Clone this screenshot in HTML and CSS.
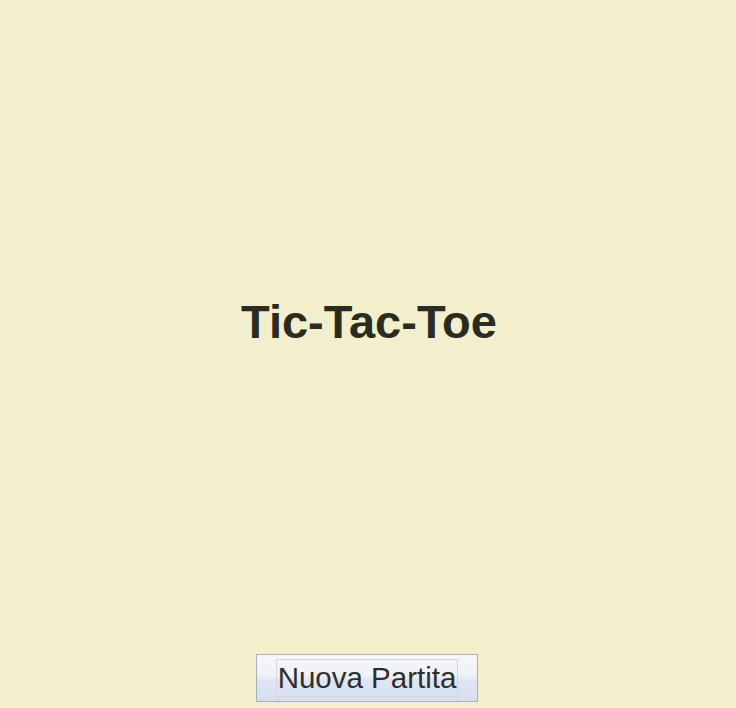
FILE: index.html
```html
<!DOCTYPE html>
<html lang="it">
<head>
<meta charset="utf-8">
<title>Tic-Tac-Toe</title>
<link rel="stylesheet" href="styles.css">
</head>
<body>
<main class="page">
  <h1 class="title">Tic-Tac-Toe</h1>
  <button class="new-game" type="button"><span class="focus">Nuova Partita</span></button>
</main>
</body>
</html>
```
FILE: styles.css
```css
html, body {
  margin: 0;
  padding: 0;
  background: #f2f0cc;
}
body {
  width: 736px;
  height: 708px;
  overflow: hidden;
  font-family: "Liberation Sans", Arial, sans-serif;
}
.page {
  display: flex;
  flex-direction: column;
  align-items: center;
  padding-left: 2px;
}
.title {
  margin: 295px 0 0 0;
  font-size: 47px;
  line-height: 54px;
  font-weight: bold;
  color: #2b2b22;
}
.new-game {
  margin-top: 305px;
  margin-left: -4px;
  width: 222px;
  height: 48px;
  padding: 0;
  border: 1px solid #a9b0bb;
  border-radius: 0;
  background: linear-gradient(#f7f8fa 0%, #eef1f6 45%, #dfe6f2 55%, #d6dfef 100%);
  display: flex;
  align-items: center;
  justify-content: center;
  font-family: "Liberation Sans", Arial, sans-serif;
  font-size: 29.5px;
  color: #2e2e2e;
}
.focus {
  display: block;
  border: 1px solid #d2d5da;
  padding: 2px 1px;
  line-height: 32px;
}
```
